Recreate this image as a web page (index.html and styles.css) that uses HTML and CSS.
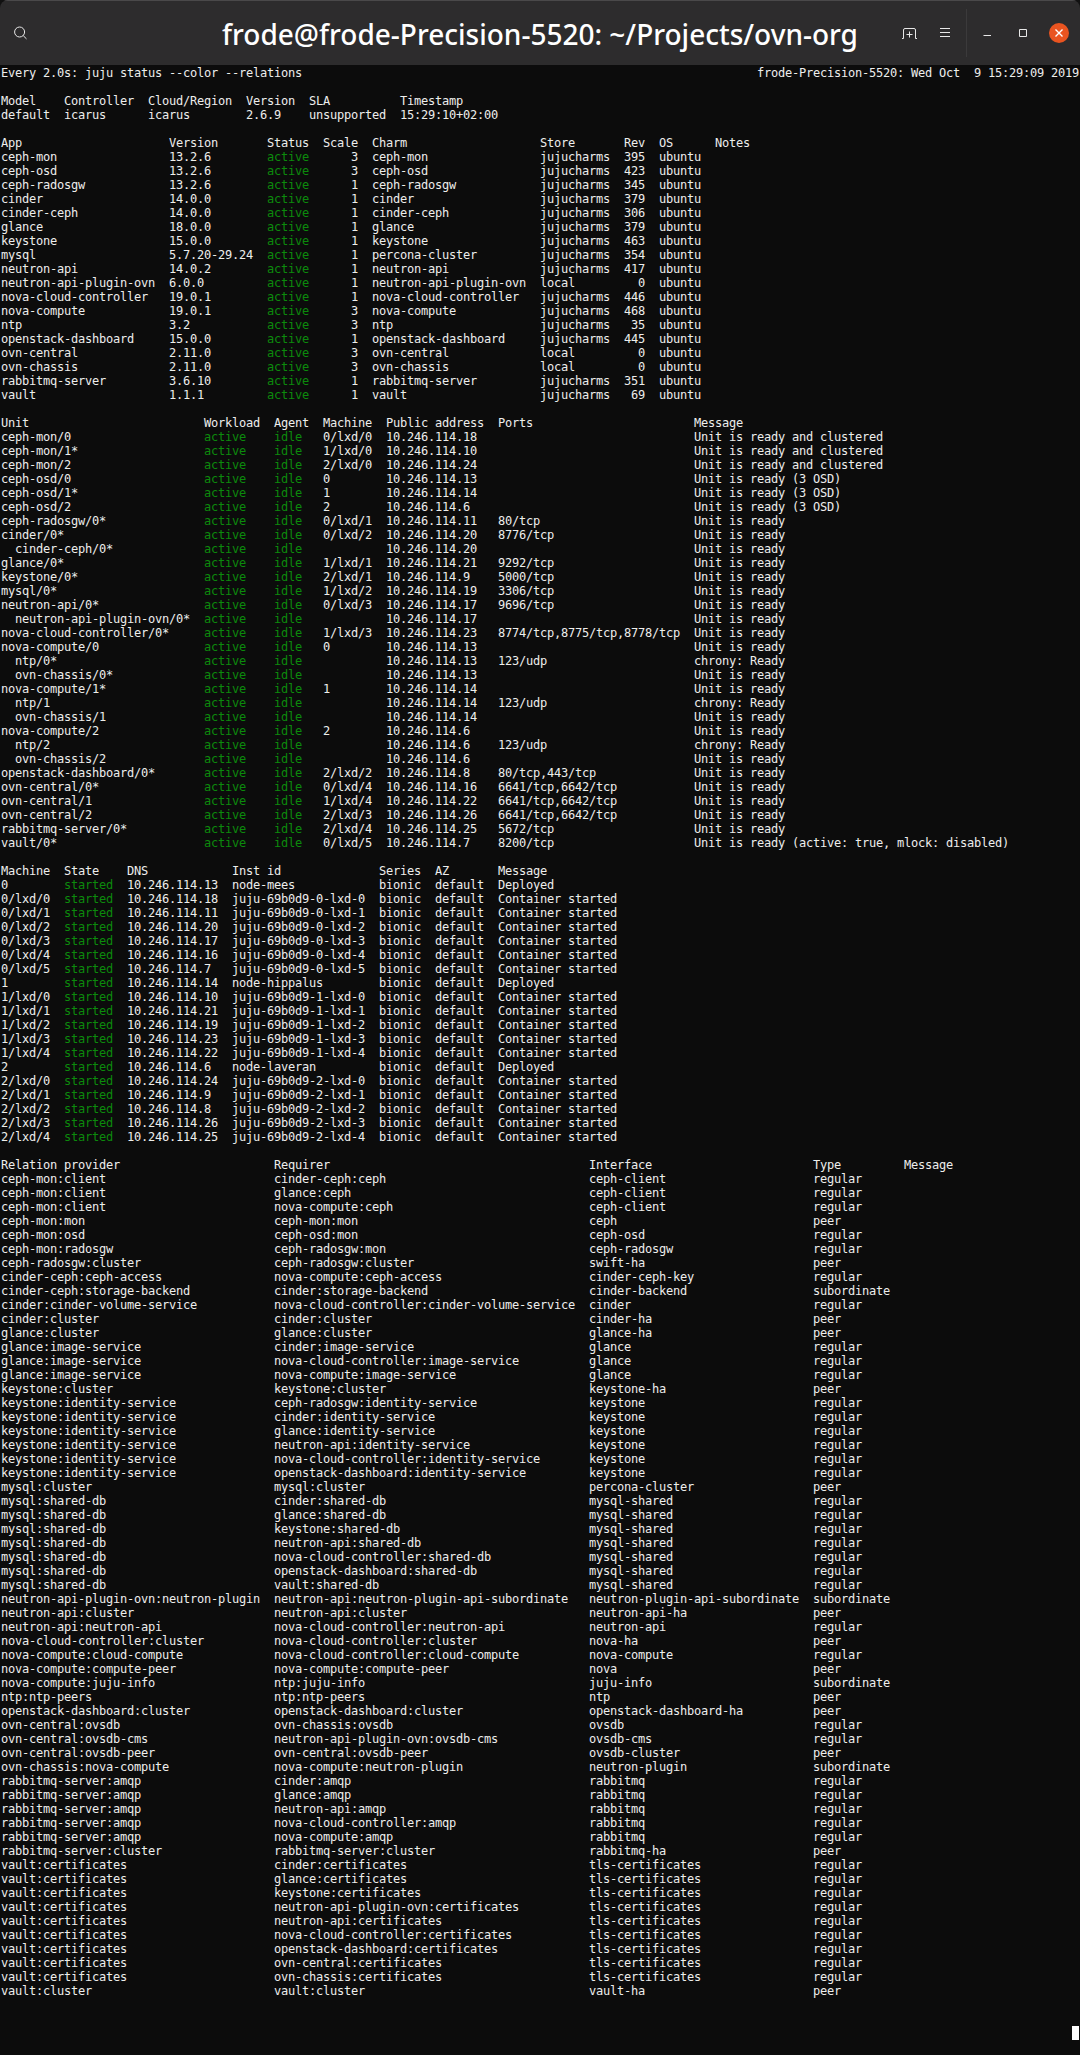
FILE: index.html
```html
<!DOCTYPE html>
<html lang="en">
<head>
<meta charset="utf-8">
<title>frode@frode-Precision-5520: ~/Projects/ovn-org</title>
<link rel="stylesheet" href="styles.css">
</head>
<body>
<div class="window">
<header class="titlebar">
<div class="tb-left">
<span class="btn"><svg class="icon" width="16" height="16" viewBox="0 0 16 16"><circle cx="7.6" cy="7" r="5"/><path d="M11.2 10.6l3.3 3.3"/></svg></span>
</div>
<h1 class="title">frode@frode-Precision-5520: ~/Projects/ovn-org</h1>
<div class="tb-right">
<span class="btn"><svg class="icon" width="16" height="16" viewBox="0 0 16 16"><path d="M1 13.500h1.500V5q0-1.500 1.500-1.500h9q1.500 0 1.500 1.500v8.500H16"/><path d="M5.500 9.500h6M8.500 6.500v6"/></svg></span>
<span class="btn"><svg class="icon" width="16" height="16" viewBox="0 0 16 16"><path d="M3 3.500h10M3 7.500h10M3 11.500h10"/></svg></span>
<span class="sep"></span>
<span class="btn"><svg class="icon" width="16" height="16" viewBox="0 0 16 16"><path d="M4.500 10.500h7.500"/></svg></span>
<span class="btn"><svg class="icon" width="16" height="16" viewBox="0 0 16 16"><path d="M4.500 4.500h7v7h-7z"/></svg></span>
<span class="btn"><svg class="close" width="20" height="20" viewBox="0 0 20 20"><circle cx="10" cy="10" r="10"/><path d="M6.500 6.500l7 7M13.500 6.500l-7 7"/></svg></span>
</div>
</header>
<main class="term">
<div class="row watch"><span>Every 2.0s: juju status --color --relations</span><span>frode-Precision-5520: Wed Oct  9 15:29:09 2019</span></div>
<div class="gap"></div>
<section class="model">
<div class="row"><span>Model</span><span>Controller</span><span>Cloud/Region</span><span>Version</span><span>SLA</span><span>Timestamp</span></div>
<div class="row"><span>default</span><span>icarus</span><span>icarus</span><span>2.6.9</span><span>unsupported</span><span>15:29:10+02:00</span></div>
</section>
<div class="gap"></div>
<section class="apps">
<div class="row head"><span>App</span><span>Version</span><span>Status</span><span>Scale</span><span>Charm</span><span>Store</span><span>Rev</span><span>OS</span><span>Notes</span></div>
<div class="row"><span>ceph-mon</span><span>13.2.6</span><span>active</span><span>3</span><span>ceph-mon</span><span>jujucharms</span><span>395</span><span>ubuntu</span></div>
<div class="row"><span>ceph-osd</span><span>13.2.6</span><span>active</span><span>3</span><span>ceph-osd</span><span>jujucharms</span><span>423</span><span>ubuntu</span></div>
<div class="row"><span>ceph-radosgw</span><span>13.2.6</span><span>active</span><span>1</span><span>ceph-radosgw</span><span>jujucharms</span><span>345</span><span>ubuntu</span></div>
<div class="row"><span>cinder</span><span>14.0.0</span><span>active</span><span>1</span><span>cinder</span><span>jujucharms</span><span>379</span><span>ubuntu</span></div>
<div class="row"><span>cinder-ceph</span><span>14.0.0</span><span>active</span><span>1</span><span>cinder-ceph</span><span>jujucharms</span><span>306</span><span>ubuntu</span></div>
<div class="row"><span>glance</span><span>18.0.0</span><span>active</span><span>1</span><span>glance</span><span>jujucharms</span><span>379</span><span>ubuntu</span></div>
<div class="row"><span>keystone</span><span>15.0.0</span><span>active</span><span>1</span><span>keystone</span><span>jujucharms</span><span>463</span><span>ubuntu</span></div>
<div class="row"><span>mysql</span><span>5.7.20-29.24</span><span>active</span><span>1</span><span>percona-cluster</span><span>jujucharms</span><span>354</span><span>ubuntu</span></div>
<div class="row"><span>neutron-api</span><span>14.0.2</span><span>active</span><span>1</span><span>neutron-api</span><span>jujucharms</span><span>417</span><span>ubuntu</span></div>
<div class="row"><span>neutron-api-plugin-ovn</span><span>6.0.0</span><span>active</span><span>1</span><span>neutron-api-plugin-ovn</span><span>local</span><span>0</span><span>ubuntu</span></div>
<div class="row"><span>nova-cloud-controller</span><span>19.0.1</span><span>active</span><span>1</span><span>nova-cloud-controller</span><span>jujucharms</span><span>446</span><span>ubuntu</span></div>
<div class="row"><span>nova-compute</span><span>19.0.1</span><span>active</span><span>3</span><span>nova-compute</span><span>jujucharms</span><span>468</span><span>ubuntu</span></div>
<div class="row"><span>ntp</span><span>3.2</span><span>active</span><span>3</span><span>ntp</span><span>jujucharms</span><span>35</span><span>ubuntu</span></div>
<div class="row"><span>openstack-dashboard</span><span>15.0.0</span><span>active</span><span>1</span><span>openstack-dashboard</span><span>jujucharms</span><span>445</span><span>ubuntu</span></div>
<div class="row"><span>ovn-central</span><span>2.11.0</span><span>active</span><span>3</span><span>ovn-central</span><span>local</span><span>0</span><span>ubuntu</span></div>
<div class="row"><span>ovn-chassis</span><span>2.11.0</span><span>active</span><span>3</span><span>ovn-chassis</span><span>local</span><span>0</span><span>ubuntu</span></div>
<div class="row"><span>rabbitmq-server</span><span>3.6.10</span><span>active</span><span>1</span><span>rabbitmq-server</span><span>jujucharms</span><span>351</span><span>ubuntu</span></div>
<div class="row"><span>vault</span><span>1.1.1</span><span>active</span><span>1</span><span>vault</span><span>jujucharms</span><span>69</span><span>ubuntu</span></div>
</section>
<div class="gap"></div>
<section class="units">
<div class="row head"><span>Unit</span><span>Workload</span><span>Agent</span><span>Machine</span><span>Public address</span><span>Ports</span><span>Message</span></div>
<div class="row"><span>ceph-mon/0</span><span>active</span><span>idle</span><span>0/lxd/0</span><span>10.246.114.18</span><span></span><span>Unit is ready and clustered</span></div>
<div class="row"><span>ceph-mon/1*</span><span>active</span><span>idle</span><span>1/lxd/0</span><span>10.246.114.10</span><span></span><span>Unit is ready and clustered</span></div>
<div class="row"><span>ceph-mon/2</span><span>active</span><span>idle</span><span>2/lxd/0</span><span>10.246.114.24</span><span></span><span>Unit is ready and clustered</span></div>
<div class="row"><span>ceph-osd/0</span><span>active</span><span>idle</span><span>0</span><span>10.246.114.13</span><span></span><span>Unit is ready (3 OSD)</span></div>
<div class="row"><span>ceph-osd/1*</span><span>active</span><span>idle</span><span>1</span><span>10.246.114.14</span><span></span><span>Unit is ready (3 OSD)</span></div>
<div class="row"><span>ceph-osd/2</span><span>active</span><span>idle</span><span>2</span><span>10.246.114.6</span><span></span><span>Unit is ready (3 OSD)</span></div>
<div class="row"><span>ceph-radosgw/0*</span><span>active</span><span>idle</span><span>0/lxd/1</span><span>10.246.114.11</span><span>80/tcp</span><span>Unit is ready</span></div>
<div class="row"><span>cinder/0*</span><span>active</span><span>idle</span><span>0/lxd/2</span><span>10.246.114.20</span><span>8776/tcp</span><span>Unit is ready</span></div>
<div class="row"><span>  cinder-ceph/0*</span><span>active</span><span>idle</span><span></span><span>10.246.114.20</span><span></span><span>Unit is ready</span></div>
<div class="row"><span>glance/0*</span><span>active</span><span>idle</span><span>1/lxd/1</span><span>10.246.114.21</span><span>9292/tcp</span><span>Unit is ready</span></div>
<div class="row"><span>keystone/0*</span><span>active</span><span>idle</span><span>2/lxd/1</span><span>10.246.114.9</span><span>5000/tcp</span><span>Unit is ready</span></div>
<div class="row"><span>mysql/0*</span><span>active</span><span>idle</span><span>1/lxd/2</span><span>10.246.114.19</span><span>3306/tcp</span><span>Unit is ready</span></div>
<div class="row"><span>neutron-api/0*</span><span>active</span><span>idle</span><span>0/lxd/3</span><span>10.246.114.17</span><span>9696/tcp</span><span>Unit is ready</span></div>
<div class="row"><span>  neutron-api-plugin-ovn/0*</span><span>active</span><span>idle</span><span></span><span>10.246.114.17</span><span></span><span>Unit is ready</span></div>
<div class="row"><span>nova-cloud-controller/0*</span><span>active</span><span>idle</span><span>1/lxd/3</span><span>10.246.114.23</span><span>8774/tcp,8775/tcp,8778/tcp</span><span>Unit is ready</span></div>
<div class="row"><span>nova-compute/0</span><span>active</span><span>idle</span><span>0</span><span>10.246.114.13</span><span></span><span>Unit is ready</span></div>
<div class="row"><span>  ntp/0*</span><span>active</span><span>idle</span><span></span><span>10.246.114.13</span><span>123/udp</span><span>chrony: Ready</span></div>
<div class="row"><span>  ovn-chassis/0*</span><span>active</span><span>idle</span><span></span><span>10.246.114.13</span><span></span><span>Unit is ready</span></div>
<div class="row"><span>nova-compute/1*</span><span>active</span><span>idle</span><span>1</span><span>10.246.114.14</span><span></span><span>Unit is ready</span></div>
<div class="row"><span>  ntp/1</span><span>active</span><span>idle</span><span></span><span>10.246.114.14</span><span>123/udp</span><span>chrony: Ready</span></div>
<div class="row"><span>  ovn-chassis/1</span><span>active</span><span>idle</span><span></span><span>10.246.114.14</span><span></span><span>Unit is ready</span></div>
<div class="row"><span>nova-compute/2</span><span>active</span><span>idle</span><span>2</span><span>10.246.114.6</span><span></span><span>Unit is ready</span></div>
<div class="row"><span>  ntp/2</span><span>active</span><span>idle</span><span></span><span>10.246.114.6</span><span>123/udp</span><span>chrony: Ready</span></div>
<div class="row"><span>  ovn-chassis/2</span><span>active</span><span>idle</span><span></span><span>10.246.114.6</span><span></span><span>Unit is ready</span></div>
<div class="row"><span>openstack-dashboard/0*</span><span>active</span><span>idle</span><span>2/lxd/2</span><span>10.246.114.8</span><span>80/tcp,443/tcp</span><span>Unit is ready</span></div>
<div class="row"><span>ovn-central/0*</span><span>active</span><span>idle</span><span>0/lxd/4</span><span>10.246.114.16</span><span>6641/tcp,6642/tcp</span><span>Unit is ready</span></div>
<div class="row"><span>ovn-central/1</span><span>active</span><span>idle</span><span>1/lxd/4</span><span>10.246.114.22</span><span>6641/tcp,6642/tcp</span><span>Unit is ready</span></div>
<div class="row"><span>ovn-central/2</span><span>active</span><span>idle</span><span>2/lxd/3</span><span>10.246.114.26</span><span>6641/tcp,6642/tcp</span><span>Unit is ready</span></div>
<div class="row"><span>rabbitmq-server/0*</span><span>active</span><span>idle</span><span>2/lxd/4</span><span>10.246.114.25</span><span>5672/tcp</span><span>Unit is ready</span></div>
<div class="row"><span>vault/0*</span><span>active</span><span>idle</span><span>0/lxd/5</span><span>10.246.114.7</span><span>8200/tcp</span><span>Unit is ready (active: true, mlock: disabled)</span></div>
</section>
<div class="gap"></div>
<section class="machines">
<div class="row head"><span>Machine</span><span>State</span><span>DNS</span><span>Inst id</span><span>Series</span><span>AZ</span><span>Message</span></div>
<div class="row"><span>0</span><span>started</span><span>10.246.114.13</span><span>node-mees</span><span>bionic</span><span>default</span><span>Deployed</span></div>
<div class="row"><span>0/lxd/0</span><span>started</span><span>10.246.114.18</span><span>juju-69b0d9-0-lxd-0</span><span>bionic</span><span>default</span><span>Container started</span></div>
<div class="row"><span>0/lxd/1</span><span>started</span><span>10.246.114.11</span><span>juju-69b0d9-0-lxd-1</span><span>bionic</span><span>default</span><span>Container started</span></div>
<div class="row"><span>0/lxd/2</span><span>started</span><span>10.246.114.20</span><span>juju-69b0d9-0-lxd-2</span><span>bionic</span><span>default</span><span>Container started</span></div>
<div class="row"><span>0/lxd/3</span><span>started</span><span>10.246.114.17</span><span>juju-69b0d9-0-lxd-3</span><span>bionic</span><span>default</span><span>Container started</span></div>
<div class="row"><span>0/lxd/4</span><span>started</span><span>10.246.114.16</span><span>juju-69b0d9-0-lxd-4</span><span>bionic</span><span>default</span><span>Container started</span></div>
<div class="row"><span>0/lxd/5</span><span>started</span><span>10.246.114.7</span><span>juju-69b0d9-0-lxd-5</span><span>bionic</span><span>default</span><span>Container started</span></div>
<div class="row"><span>1</span><span>started</span><span>10.246.114.14</span><span>node-hippalus</span><span>bionic</span><span>default</span><span>Deployed</span></div>
<div class="row"><span>1/lxd/0</span><span>started</span><span>10.246.114.10</span><span>juju-69b0d9-1-lxd-0</span><span>bionic</span><span>default</span><span>Container started</span></div>
<div class="row"><span>1/lxd/1</span><span>started</span><span>10.246.114.21</span><span>juju-69b0d9-1-lxd-1</span><span>bionic</span><span>default</span><span>Container started</span></div>
<div class="row"><span>1/lxd/2</span><span>started</span><span>10.246.114.19</span><span>juju-69b0d9-1-lxd-2</span><span>bionic</span><span>default</span><span>Container started</span></div>
<div class="row"><span>1/lxd/3</span><span>started</span><span>10.246.114.23</span><span>juju-69b0d9-1-lxd-3</span><span>bionic</span><span>default</span><span>Container started</span></div>
<div class="row"><span>1/lxd/4</span><span>started</span><span>10.246.114.22</span><span>juju-69b0d9-1-lxd-4</span><span>bionic</span><span>default</span><span>Container started</span></div>
<div class="row"><span>2</span><span>started</span><span>10.246.114.6</span><span>node-laveran</span><span>bionic</span><span>default</span><span>Deployed</span></div>
<div class="row"><span>2/lxd/0</span><span>started</span><span>10.246.114.24</span><span>juju-69b0d9-2-lxd-0</span><span>bionic</span><span>default</span><span>Container started</span></div>
<div class="row"><span>2/lxd/1</span><span>started</span><span>10.246.114.9</span><span>juju-69b0d9-2-lxd-1</span><span>bionic</span><span>default</span><span>Container started</span></div>
<div class="row"><span>2/lxd/2</span><span>started</span><span>10.246.114.8</span><span>juju-69b0d9-2-lxd-2</span><span>bionic</span><span>default</span><span>Container started</span></div>
<div class="row"><span>2/lxd/3</span><span>started</span><span>10.246.114.26</span><span>juju-69b0d9-2-lxd-3</span><span>bionic</span><span>default</span><span>Container started</span></div>
<div class="row"><span>2/lxd/4</span><span>started</span><span>10.246.114.25</span><span>juju-69b0d9-2-lxd-4</span><span>bionic</span><span>default</span><span>Container started</span></div>
</section>
<div class="gap"></div>
<section class="relations">
<div class="row"><span>Relation provider</span><span>Requirer</span><span>Interface</span><span>Type</span><span>Message</span></div>
<div class="row"><span>ceph-mon:client</span><span>cinder-ceph:ceph</span><span>ceph-client</span><span>regular</span></div>
<div class="row"><span>ceph-mon:client</span><span>glance:ceph</span><span>ceph-client</span><span>regular</span></div>
<div class="row"><span>ceph-mon:client</span><span>nova-compute:ceph</span><span>ceph-client</span><span>regular</span></div>
<div class="row"><span>ceph-mon:mon</span><span>ceph-mon:mon</span><span>ceph</span><span>peer</span></div>
<div class="row"><span>ceph-mon:osd</span><span>ceph-osd:mon</span><span>ceph-osd</span><span>regular</span></div>
<div class="row"><span>ceph-mon:radosgw</span><span>ceph-radosgw:mon</span><span>ceph-radosgw</span><span>regular</span></div>
<div class="row"><span>ceph-radosgw:cluster</span><span>ceph-radosgw:cluster</span><span>swift-ha</span><span>peer</span></div>
<div class="row"><span>cinder-ceph:ceph-access</span><span>nova-compute:ceph-access</span><span>cinder-ceph-key</span><span>regular</span></div>
<div class="row"><span>cinder-ceph:storage-backend</span><span>cinder:storage-backend</span><span>cinder-backend</span><span>subordinate</span></div>
<div class="row"><span>cinder:cinder-volume-service</span><span>nova-cloud-controller:cinder-volume-service</span><span>cinder</span><span>regular</span></div>
<div class="row"><span>cinder:cluster</span><span>cinder:cluster</span><span>cinder-ha</span><span>peer</span></div>
<div class="row"><span>glance:cluster</span><span>glance:cluster</span><span>glance-ha</span><span>peer</span></div>
<div class="row"><span>glance:image-service</span><span>cinder:image-service</span><span>glance</span><span>regular</span></div>
<div class="row"><span>glance:image-service</span><span>nova-cloud-controller:image-service</span><span>glance</span><span>regular</span></div>
<div class="row"><span>glance:image-service</span><span>nova-compute:image-service</span><span>glance</span><span>regular</span></div>
<div class="row"><span>keystone:cluster</span><span>keystone:cluster</span><span>keystone-ha</span><span>peer</span></div>
<div class="row"><span>keystone:identity-service</span><span>ceph-radosgw:identity-service</span><span>keystone</span><span>regular</span></div>
<div class="row"><span>keystone:identity-service</span><span>cinder:identity-service</span><span>keystone</span><span>regular</span></div>
<div class="row"><span>keystone:identity-service</span><span>glance:identity-service</span><span>keystone</span><span>regular</span></div>
<div class="row"><span>keystone:identity-service</span><span>neutron-api:identity-service</span><span>keystone</span><span>regular</span></div>
<div class="row"><span>keystone:identity-service</span><span>nova-cloud-controller:identity-service</span><span>keystone</span><span>regular</span></div>
<div class="row"><span>keystone:identity-service</span><span>openstack-dashboard:identity-service</span><span>keystone</span><span>regular</span></div>
<div class="row"><span>mysql:cluster</span><span>mysql:cluster</span><span>percona-cluster</span><span>peer</span></div>
<div class="row"><span>mysql:shared-db</span><span>cinder:shared-db</span><span>mysql-shared</span><span>regular</span></div>
<div class="row"><span>mysql:shared-db</span><span>glance:shared-db</span><span>mysql-shared</span><span>regular</span></div>
<div class="row"><span>mysql:shared-db</span><span>keystone:shared-db</span><span>mysql-shared</span><span>regular</span></div>
<div class="row"><span>mysql:shared-db</span><span>neutron-api:shared-db</span><span>mysql-shared</span><span>regular</span></div>
<div class="row"><span>mysql:shared-db</span><span>nova-cloud-controller:shared-db</span><span>mysql-shared</span><span>regular</span></div>
<div class="row"><span>mysql:shared-db</span><span>openstack-dashboard:shared-db</span><span>mysql-shared</span><span>regular</span></div>
<div class="row"><span>mysql:shared-db</span><span>vault:shared-db</span><span>mysql-shared</span><span>regular</span></div>
<div class="row"><span>neutron-api-plugin-ovn:neutron-plugin</span><span>neutron-api:neutron-plugin-api-subordinate</span><span>neutron-plugin-api-subordinate</span><span>subordinate</span></div>
<div class="row"><span>neutron-api:cluster</span><span>neutron-api:cluster</span><span>neutron-api-ha</span><span>peer</span></div>
<div class="row"><span>neutron-api:neutron-api</span><span>nova-cloud-controller:neutron-api</span><span>neutron-api</span><span>regular</span></div>
<div class="row"><span>nova-cloud-controller:cluster</span><span>nova-cloud-controller:cluster</span><span>nova-ha</span><span>peer</span></div>
<div class="row"><span>nova-compute:cloud-compute</span><span>nova-cloud-controller:cloud-compute</span><span>nova-compute</span><span>regular</span></div>
<div class="row"><span>nova-compute:compute-peer</span><span>nova-compute:compute-peer</span><span>nova</span><span>peer</span></div>
<div class="row"><span>nova-compute:juju-info</span><span>ntp:juju-info</span><span>juju-info</span><span>subordinate</span></div>
<div class="row"><span>ntp:ntp-peers</span><span>ntp:ntp-peers</span><span>ntp</span><span>peer</span></div>
<div class="row"><span>openstack-dashboard:cluster</span><span>openstack-dashboard:cluster</span><span>openstack-dashboard-ha</span><span>peer</span></div>
<div class="row"><span>ovn-central:ovsdb</span><span>ovn-chassis:ovsdb</span><span>ovsdb</span><span>regular</span></div>
<div class="row"><span>ovn-central:ovsdb-cms</span><span>neutron-api-plugin-ovn:ovsdb-cms</span><span>ovsdb-cms</span><span>regular</span></div>
<div class="row"><span>ovn-central:ovsdb-peer</span><span>ovn-central:ovsdb-peer</span><span>ovsdb-cluster</span><span>peer</span></div>
<div class="row"><span>ovn-chassis:nova-compute</span><span>nova-compute:neutron-plugin</span><span>neutron-plugin</span><span>subordinate</span></div>
<div class="row"><span>rabbitmq-server:amqp</span><span>cinder:amqp</span><span>rabbitmq</span><span>regular</span></div>
<div class="row"><span>rabbitmq-server:amqp</span><span>glance:amqp</span><span>rabbitmq</span><span>regular</span></div>
<div class="row"><span>rabbitmq-server:amqp</span><span>neutron-api:amqp</span><span>rabbitmq</span><span>regular</span></div>
<div class="row"><span>rabbitmq-server:amqp</span><span>nova-cloud-controller:amqp</span><span>rabbitmq</span><span>regular</span></div>
<div class="row"><span>rabbitmq-server:amqp</span><span>nova-compute:amqp</span><span>rabbitmq</span><span>regular</span></div>
<div class="row"><span>rabbitmq-server:cluster</span><span>rabbitmq-server:cluster</span><span>rabbitmq-ha</span><span>peer</span></div>
<div class="row"><span>vault:certificates</span><span>cinder:certificates</span><span>tls-certificates</span><span>regular</span></div>
<div class="row"><span>vault:certificates</span><span>glance:certificates</span><span>tls-certificates</span><span>regular</span></div>
<div class="row"><span>vault:certificates</span><span>keystone:certificates</span><span>tls-certificates</span><span>regular</span></div>
<div class="row"><span>vault:certificates</span><span>neutron-api-plugin-ovn:certificates</span><span>tls-certificates</span><span>regular</span></div>
<div class="row"><span>vault:certificates</span><span>neutron-api:certificates</span><span>tls-certificates</span><span>regular</span></div>
<div class="row"><span>vault:certificates</span><span>nova-cloud-controller:certificates</span><span>tls-certificates</span><span>regular</span></div>
<div class="row"><span>vault:certificates</span><span>openstack-dashboard:certificates</span><span>tls-certificates</span><span>regular</span></div>
<div class="row"><span>vault:certificates</span><span>ovn-central:certificates</span><span>tls-certificates</span><span>regular</span></div>
<div class="row"><span>vault:certificates</span><span>ovn-chassis:certificates</span><span>tls-certificates</span><span>regular</span></div>
<div class="row"><span>vault:cluster</span><span>vault:cluster</span><span>vault-ha</span><span>peer</span></div>
</section>
<div class="cursor-line"><span class="cursor"></span></div>
</main>
</div>
</body>
</html>
```
FILE: styles.css
```css
html, body { margin: 0; padding: 0; background: #111; }
body { width: 1080px; height: 2055px; overflow: hidden; }
.window { display: flex; flex-direction: column; height: 2055px; background: #0c0c0c; border-radius: 8px 8px 0 0; overflow: hidden; }

.titlebar { flex: 0 0 65px; box-sizing: border-box; display: flex; align-items: center; justify-content: space-between; background: #2d2c2d; border-top: 1px solid #4a494a; padding: 0 3px 0 2px; position: relative; }
.tb-left, .tb-right { display: flex; align-items: center; }
.btn { width: 36px; height: 36px; display: flex; align-items: center; justify-content: center; }
.title { position: absolute; left: 0; right: 0; top: 0; margin: 0; text-align: center; font: 500 28px/66px "Noto Sans", sans-serif; color: #fff; }
.icon { display: block; fill: none; stroke: #e8e8e8; stroke-width: 1; }
.sep { width: 1px; height: 48px; margin: 0 2px 0 3px; background: #3b3a3b; }
.close { display: block; }
.close circle { fill: #e95420; }
.close path { stroke: #fff; stroke-width: 1.4; fill: none; }

.term { flex: 1; padding: 1px 0 0 1px; color: #eeeeec; font-family: "DejaVu Sans Mono", monospace; font-size: 12px; letter-spacing: -0.224px; line-height: 14px; }
.row { display: grid; height: 14px; }
.row span { min-width: 0; white-space: pre; }
.gap { height: 14px; }
.watch { grid-template-columns: 756px 322px; }
.model .row { grid-template-columns: 63px 84px 98px 63px 91px 1fr; }
.apps .row { grid-template-columns: 168px 98px 56px 49px 168px 84px 35px 56px 1fr; }
.apps .row span:nth-child(4), .apps .row span:nth-child(7) { text-align: right; padding-right: 14px; }
.units .row { grid-template-columns: 203px 70px 49px 63px 112px 196px 1fr; }
.machines .row { grid-template-columns: 63px 63px 105px 147px 56px 63px 1fr; }
.relations .row { grid-template-columns: 273px 315px 224px 91px 1fr; }

.units .row:not(.head) span:nth-child(2),
.units .row:not(.head) span:nth-child(3),
.apps .row:not(.head) span:nth-child(3),
.machines .row:not(.head) span:nth-child(2) { color: #0c8a0c; }

.cursor-line { height: 14px; margin-top: 28px; padding-left: 1071px; }
.cursor { display: block; width: 7px; height: 14px; background: #fff; }
```
